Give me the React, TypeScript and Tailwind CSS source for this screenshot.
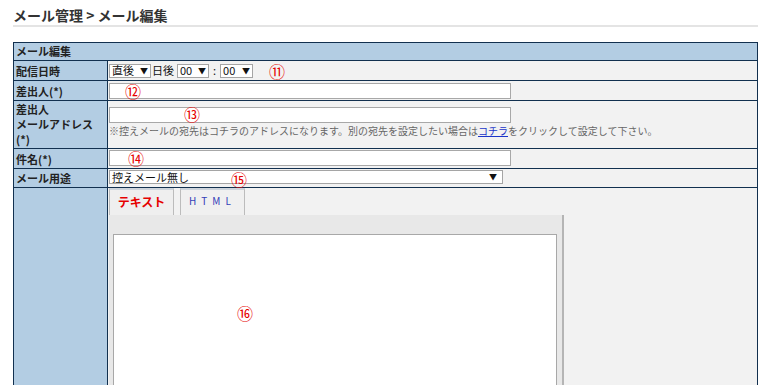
import React from "react";

const font = { fontFamily: '"Noto Sans CJK JP", "Noto Sans", sans-serif' };

const Mark = ({ n, className = "" }: { n: string; className?: string }) => (
  <span className={`text-[16px] leading-[14px] text-[#e60000] ${className}`}>{n}</span>
);

const Row = ({
  label,
  h,
  children,
}: {
  label: React.ReactNode;
  h: string;
  children?: React.ReactNode;
}) => (
  <div className={`flex border-t border-[#12304f] ${h}`}>
    <div className="w-[94px] shrink-0 border-r border-[#12304f] bg-[#b3cde3] px-[2px] text-[11px] font-bold leading-[14px] text-[#222] flex items-center">
      {label}
    </div>
    <div className="flex-1 bg-[#f2f2f2] pl-[1px]">{children}</div>
  </div>
);

const Box = ({ children }: { children?: React.ReactNode }) => (
  <div className="flex items-center h-[16px] w-[402px] border border-[#a8a8a8] bg-white">{children}</div>
);

const Sel = ({ text, w }: { text: string; w: string }) => (
  <span className={`inline-flex items-center justify-between h-[14px] ${w} border border-[#a5a5a5] bg-white px-[2px] text-[11px] leading-none text-[#111]`}>
    <span>{text}</span>
    <span className="text-[8px]">▼</span>
  </span>
);

export default function App() {
  return (
    <div className="min-h-screen bg-white pt-[6px] px-[13px]" style={font}>
      <h1 className="h-[18px] text-[14px] font-bold leading-[18px] text-[#333]">メール管理 &gt; メール編集</h1>
      <div className="mt-[1px] h-[2px] w-[745px] bg-[#e4e4e4]" />

      <div className="mt-[15px] w-[745px] border border-t-0 border-b-0 border-[#12304f]">
        <div className="h-[18px] border-t border-[#12304f] bg-[#b3cde3] px-[2px] text-[11px] font-bold leading-[17px] text-[#222]">
          メール編集
        </div>

        <Row label="配信日時" h="h-[20px]">
          <div className="flex h-full items-center text-[11px] text-[#111]">
            <Sel text="直後" w="w-[42px]" />
            <span className="ml-[1px]">日後</span>
            <span className="ml-[3px]"><Sel text="00" w="w-[32px]" /></span>
            <span className="mx-[4px]">:</span>
            <Sel text="00" w="w-[33px]" />
            <Mark n="⑪" className="ml-[16px]" />
          </div>
        </Row>

        <Row label="差出人(*)" h="h-[20px]">
          <div className="pt-[2px]">
            <Box>
              <Mark n="⑫" className="ml-[15px]" />
            </Box>
          </div>
        </Row>

        <Row
          label={
            <div className="leading-[15px]">
              差出人
              <br />
              メールアドレス
              <br />
              (*)
            </div>
          }
          h="h-[48px]"
        >
          <div className="pt-[6px]">
            <Box>
              <Mark n="⑬" className="ml-[74px] -mt-[2px] text-[15px] leading-[12px]" />
            </Box>
            <p className="mt-[2px] text-[10px] leading-[12px] text-[#666]">
              ※控えメールの宛先はコチラのアドレスになります。別の宛先を設定したい場合は
              <a href="#" className="text-[#1a34c8] underline">コチラ</a>
              をクリックして設定して下さい。
            </p>
          </div>
        </Row>

        <Row label="件名(*)" h="h-[20px]">
          <div className="pt-[1px]">
            <Box>
              <Mark n="⑭" className="ml-[18px]" />
            </Box>
          </div>
        </Row>

        <Row label="メール用途" h="h-[19px]">
          <div className="pt-[1px]">
            <div className="flex h-[14px] w-[394px] items-center border border-[#a5a5a5] bg-white pl-[2px] text-[11px] leading-none text-[#111]">
              <span>控えメール無し</span>
              <Mark n="⑮" className="ml-[42px] mt-[3px]" />
              <span className="ml-auto mr-[5px] text-[8px]">▼</span>
            </div>
          </div>
        </Row>

        <Row label="" h="h-[200px]">
          <div className="flex h-[27px] items-end gap-[6px]">
            <div className="flex h-[27px] w-[65px] justify-center border-x border-t-2 border-x-[#bcbcbc] border-t-[#cdd4dc] bg-[#efefef] pt-[3px] text-[12px] font-bold text-[#e60000]">
              テキスト
            </div>
            <div className="flex h-[27px] w-[65px] justify-center border-x border-t-2 border-x-[#bcbcbc] border-t-[#cdd4dc] bg-[#f0f0f0] pt-[3px] text-[10px] tracking-[5px] text-[#3340b8]">
              HTML
            </div>
          </div>
          <div className="h-[180px] w-[455px] border-r-2 border-[#b5b5b5] bg-[#e8e8e8] pl-[4px] pt-[19px]">
            <div className="h-[170px] w-[444px] border border-[#a8a8a8] bg-white pl-[123px] pt-[66px]">
              <Mark n="⑯" />
            </div>
          </div>
        </Row>
      </div>
    </div>
  );
}
